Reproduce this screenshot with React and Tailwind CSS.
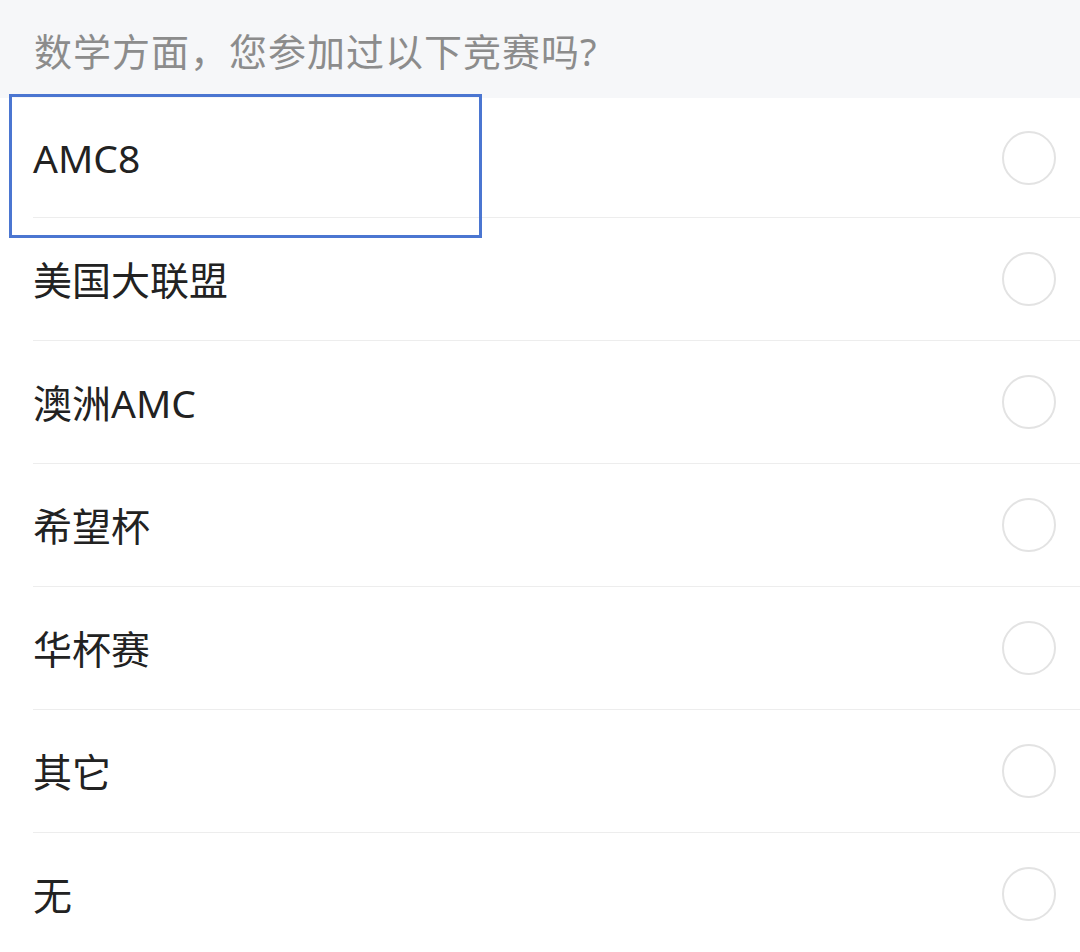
import React from "react";

const options = ["AMC8", "美国大联盟", "澳洲AMC", "希望杯", "华杯赛", "其它", "无"];

function Radio() {
  return <div className="w-[54px] h-[54px] rounded-full border-2 border-[#e3e3e3] bg-white" />;
}

export default function App() {
  return (
    <div
      className="relative w-[1080px] h-[952px] overflow-hidden bg-white"
      style={{ fontFamily: '"Noto Sans", "Noto Sans CJK SC", sans-serif' }}
    >
      {/* question title */}
      <div className="h-[98px] bg-[#f6f7f9] flex items-center pl-[34px] pt-[4px]">
        <span className="text-[38px] text-[#8c8c8c] leading-none tracking-[1px]">数学方面，您参加过以下竞赛吗?</span>
      </div>

      {/* options */}
      <div className="flex flex-col">
        {options.map((opt, i) => (
          <div
            key={opt}
            className={`ml-[33px] flex items-center justify-between pr-[24px] border-b border-[#ededed] ${
              i === 0 ? "h-[120px]" : "h-[123px]"
            }`}
          >
            <span className="text-[39px] text-[#222] leading-none">{opt}</span>
            <Radio />
          </div>
        ))}
      </div>

      {/* focus highlight */}
      <div className="absolute left-[9px] top-[94px] w-[473px] h-[144px] border-[3px] border-[#4b76d1]" />
    </div>
  );
}
